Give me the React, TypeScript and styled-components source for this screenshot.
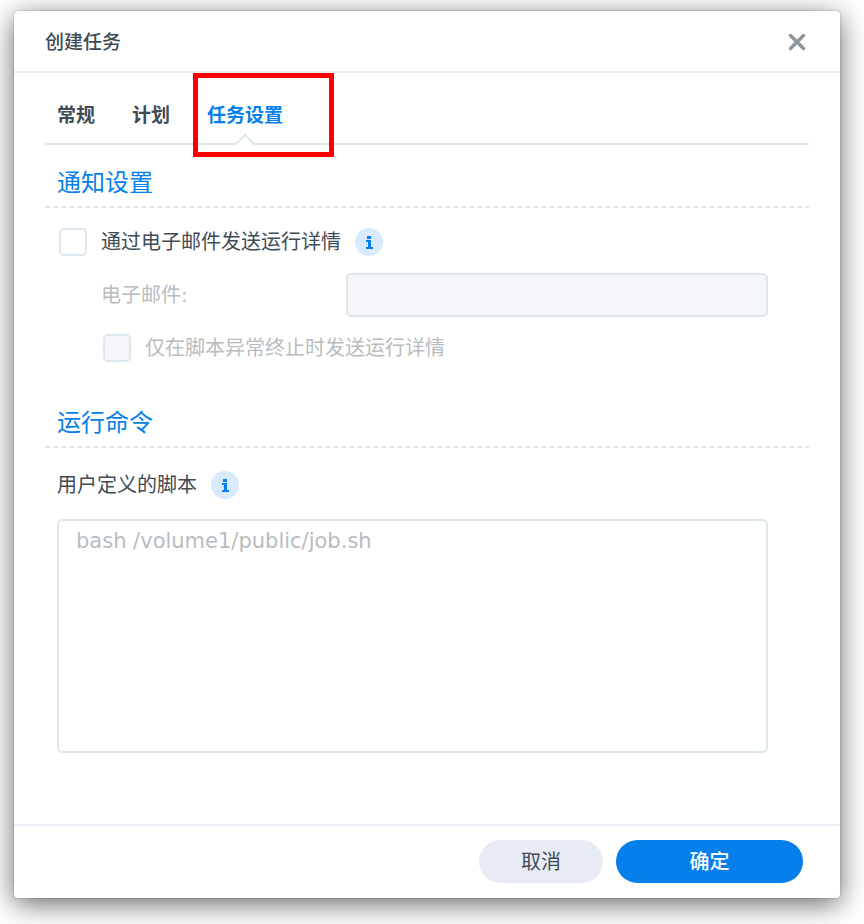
import React, { useState } from "react";
import styled, { createGlobalStyle, css } from "styled-components";

const color = {
  text: "#414b55",
  muted: "#b8bcc1",
  accent: "#057feb",
  line: "#dfe7ee",
  softLine: "#e9eff5",
  disabled: "#f4f6fa",
};

const GlobalStyle = createGlobalStyle`
  *, *::before, *::after { box-sizing: border-box; }
  body {
    margin: 0;
    background: #fff;
    color: ${color.text};
    font-family: "DejaVu Sans", "Noto Sans CJK SC", sans-serif;
    font-size: 20px;
    line-height: 28px;
  }
  button, input, textarea { font: inherit; color: inherit; }
`;

const Page = styled.main`
  display: flex;
  min-height: 100vh;
  padding: 11px 24px 26px 14px;
`;

const Dialog = styled.section`
  display: flex;
  flex: 1;
  flex-direction: column;
  min-width: 0;
  border-radius: 4px;
  background: #fff;
  box-shadow: 0 0 2px rgba(0, 0, 0, 0.3), 0 6px 28px rgba(0, 0, 0, 0.6);
`;

const Header = styled.header`
  display: flex;
  align-items: center;
  justify-content: space-between;
  height: 62px;
  padding: 2px 33px 0 31px;
  border-bottom: 2px solid ${color.softLine};
`;

const Title = styled.h1`
  margin: 0;
  font-size: 19px;
  font-weight: 500;
`;

const CloseButton = styled.button`
  display: flex;
  padding: 0;
  border: 0;
  background: none;
  cursor: pointer;
`;

const Content = styled.div`
  flex: 1;
  padding: 0 31px 71px;
`;

const TabList = styled.div`
  display: flex;
  gap: 37px;
  height: 72px;
  padding: 0 12px;
  border-bottom: 2px solid ${color.line};
`;

const Tab = styled.button<{ $active: boolean }>`
  position: relative;
  padding: 28px 0 14px;
  border: 0;
  background: none;
  font-size: 19px;
  font-weight: 700;
  white-space: nowrap;
  cursor: pointer;
  color: ${(p) => (p.$active ? color.accent : color.text)};
`;

const Pointer = styled.svg`
  position: absolute;
  bottom: -2px;
  left: calc(50% - 10px);
`;

const Highlight = styled.span`
  position: absolute;
  inset: 0 -51px -14px -14px;
  border: 5px solid #fe0000;
  pointer-events: none;
`;

const SectionTitle = styled.h2`
  margin: 0;
  padding: 22px 12px 9px;
  background: repeating-linear-gradient(90deg, ${color.line} 0 5px, transparent 5px 8px)
    bottom / 100% 2px no-repeat;
  color: ${color.accent};
  font-size: 24px;
  font-weight: 400;
  line-height: 32px;
`;

const Fields = styled.div`
  display: flex;
  flex-direction: column;
  gap: 17px;
  padding: 20px 41px 23px 12px;
`;

const Indent = styled.div`
  display: flex;
  flex-direction: column;
  gap: 17px;
  padding-left: 44px;
`;

const Row = styled.div`
  display: flex;
  align-items: center;
  gap: 14px;
`;

const CheckLabel = styled.label<{ $disabled?: boolean }>`
  display: flex;
  align-items: center;
  gap: 14px;
  padding-left: 2px;
  color: ${(p) => (p.$disabled ? color.muted : color.text)};
`;

const fieldBox = css`
  border: 2px solid ${color.line};
  border-radius: 5px;
  background: #fff;
  &:disabled { background: ${color.disabled}; }
`;

const Checkbox = styled.input`
  ${fieldBox}
  appearance: none;
  flex: none;
  width: 28px;
  height: 28px;
  margin: 0;
  &:checked { background: ${color.accent}; }
`;

const EmailRow = styled.div`
  display: grid;
  grid-template-columns: 245px 1fr;
  align-items: center;
`;

const FieldLabel = styled.label<{ $disabled?: boolean }>`
  color: ${(p) => (p.$disabled ? color.muted : color.text)};
`;

const TextInput = styled.input`
  ${fieldBox}
  width: 100%;
  min-width: 0;
  height: 44px;
  padding: 0 18px;
`;

const ScriptFields = styled.div`
  display: flex;
  flex-direction: column;
  gap: 20px;
  padding: 23px 41px 0 12px;
`;

const ScriptArea = styled.textarea`
  ${fieldBox}
  display: block;
  width: 100%;
  height: 234px;
  padding: 6px 17px;
  font-size: 21px;
  resize: none;
  &::placeholder { color: ${color.muted}; opacity: 1; }
`;

const InfoButton = styled.button`
  display: flex;
  padding: 0;
  border: 0;
  background: none;
`;

const Footer = styled.footer`
  display: flex;
  justify-content: flex-end;
  gap: 13px;
  padding: 14px 37px 15px;
  border-top: 2px solid ${color.softLine};
`;

const ActionButton = styled.button<{ $primary?: boolean }>`
  width: ${(p) => (p.$primary ? 187 : 124)}px;
  height: 43px;
  padding: 0;
  border: 0;
  border-radius: 22px;
  background: ${(p) => (p.$primary ? color.accent : "#e7ecf4")};
  color: ${(p) => (p.$primary ? "#fff" : color.text)};
  font-weight: ${(p) => (p.$primary ? 500 : 400)};
  cursor: pointer;
`;

function Info({ label }: { label: string }) {
  return (
    <InfoButton type="button" aria-label={label}>
      <svg width="28" height="28" viewBox="0 0 28 28" aria-hidden="true">
        <circle cx="14" cy="14" r="14" fill="#d9eafc" />
        <path d="M12 8h4v3h-4zM11 12h5v7h2v2h-7v-2h2v-5h-2z" fill={color.accent} />
      </svg>
    </InfoButton>
  );
}

const tabs = ["常规", "计划", "任务设置"];

export default function App() {
  const [active, setActive] = useState(2);
  const [sendMail, setSendMail] = useState(false);

  return (
    <>
      <GlobalStyle />
      <Page>
        <Dialog role="dialog" aria-labelledby="dialog-title">
          <Header>
            <Title id="dialog-title">创建任务</Title>
            <CloseButton type="button" aria-label="关闭">
              <svg width="20" height="20" viewBox="0 0 20 20" aria-hidden="true">
                <path d="M3.5 3.5l13 13M16.5 3.5l-13 13" stroke="#8c959d" strokeWidth="3.4" strokeLinecap="round" />
              </svg>
            </CloseButton>
          </Header>
          <Content>
            <TabList role="tablist">
              {tabs.map((name, i) => (
                <Tab
                  key={name}
                  type="button"
                  role="tab"
                  aria-selected={i === active}
                  $active={i === active}
                  onClick={() => setActive(i)}
                >
                  {name}
                  {i === active && (
                    <Pointer width="20" height="12" viewBox="0 0 20 12" aria-hidden="true">
                      <path d="M1 12V11L10 2L19 11V12z" fill="#fff" />
                      <path d="M0 11H1L10 2L19 11H20" fill="none" stroke={color.line} strokeWidth="2" />
                    </Pointer>
                  )}
                  {i === 2 && <Highlight />}
                </Tab>
              ))}
            </TabList>
            <SectionTitle>通知设置</SectionTitle>
            <Fields>
              <Row>
                <CheckLabel>
                  <Checkbox
                    type="checkbox"
                    checked={sendMail}
                    onChange={(e) => setSendMail(e.target.checked)}
                  />
                  通过电子邮件发送运行详情
                </CheckLabel>
                <Info label="通知说明" />
              </Row>
              <Indent>
                <EmailRow>
                  <FieldLabel htmlFor="email" $disabled={!sendMail}>电子邮件:</FieldLabel>
                  <TextInput id="email" type="email" disabled={!sendMail} />
                </EmailRow>
                <CheckLabel $disabled={!sendMail}>
                  <Checkbox type="checkbox" disabled={!sendMail} />
                  仅在脚本异常终止时发送运行详情
                </CheckLabel>
              </Indent>
            </Fields>
            <SectionTitle>运行命令</SectionTitle>
            <ScriptFields>
              <Row>
                <FieldLabel htmlFor="script">用户定义的脚本</FieldLabel>
                <Info label="脚本说明" />
              </Row>
              <ScriptArea id="script" placeholder="bash /volume1/public/job.sh" />
            </ScriptFields>
          </Content>
          <Footer>
            <ActionButton type="button">取消</ActionButton>
            <ActionButton type="button" $primary>确定</ActionButton>
          </Footer>
        </Dialog>
      </Page>
    </>
  );
}
